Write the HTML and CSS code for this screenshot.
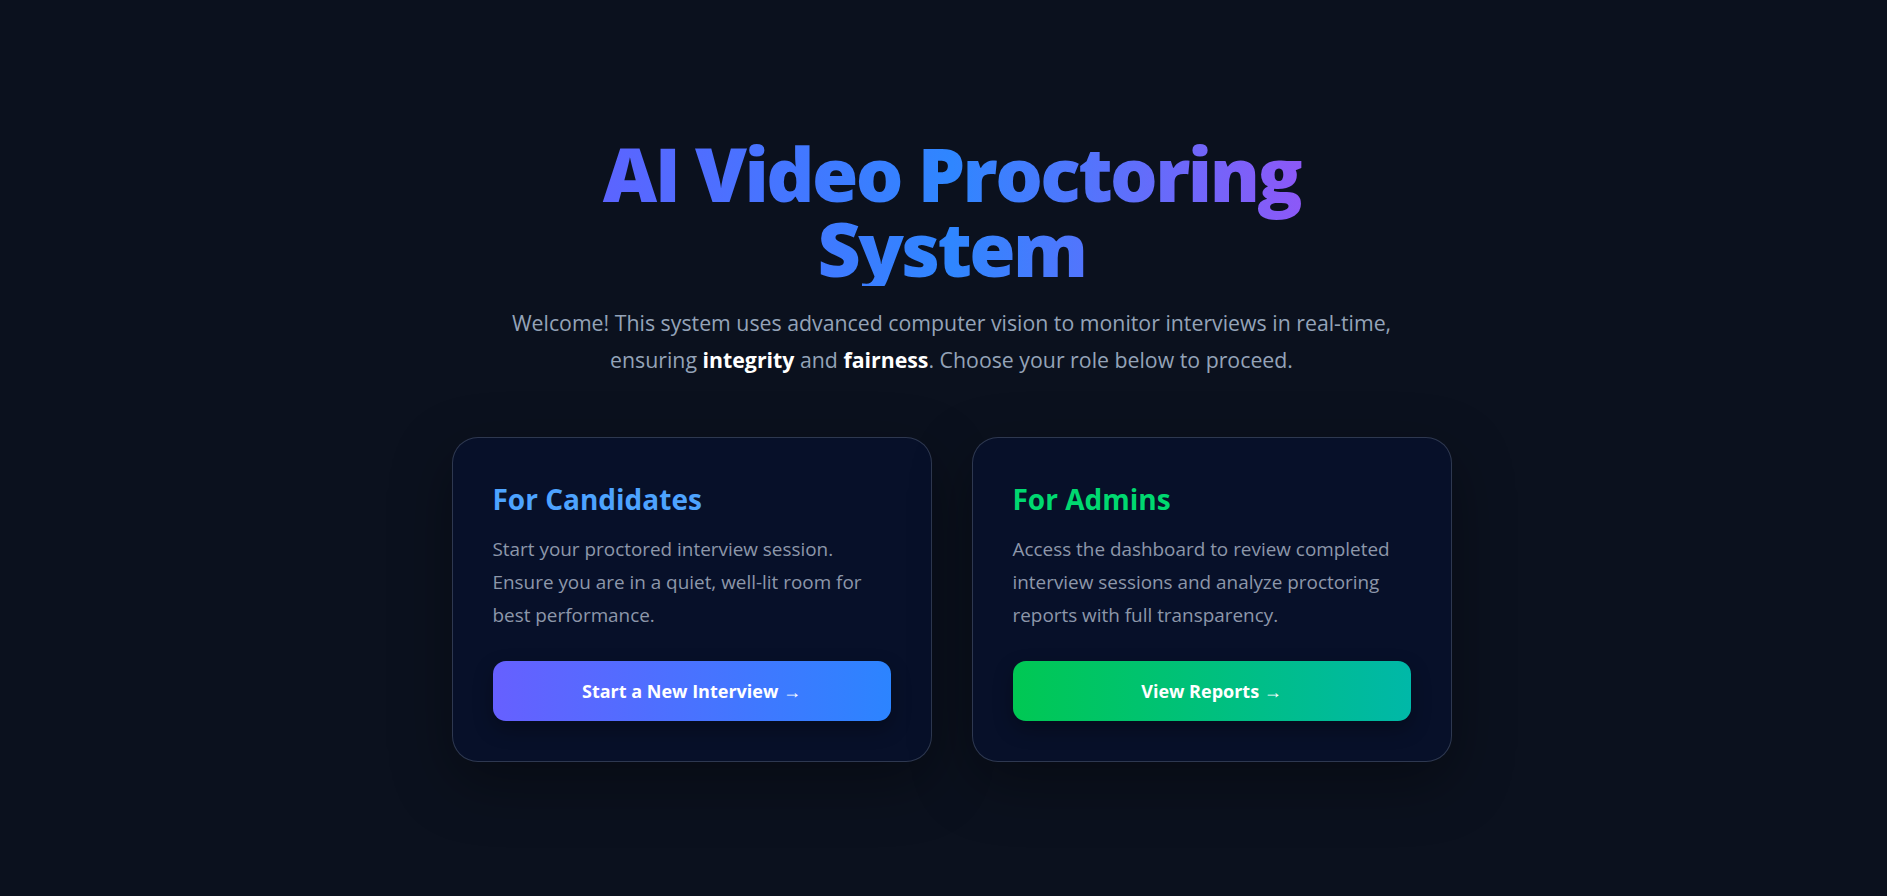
FILE: index.html
```html
<!DOCTYPE html>
<html lang="en">
<head>
<meta charset="utf-8">
<title>AI Video Proctoring System</title>
<link rel="stylesheet" href="styles.css">
</head>
<body>
<main class="page">
  <header class="hero">
    <h1 class="hero-title">AI Video Proctoring System</h1>
    <p class="hero-sub">Welcome! This system uses advanced computer vision to monitor interviews in real-time, ensuring <strong>integrity</strong> and <strong>fairness</strong>. Choose your role below to proceed.</p>
  </header>
  <section class="roles">
    <article class="card">
      <h2 class="card-title card-title--blue">For Candidates</h2>
      <p class="card-text">Start your proctored interview session. Ensure you are in a quiet, well-lit room for best performance.</p>
      <a class="btn btn--blue" href="#">Start a New Interview →</a>
    </article>
    <article class="card">
      <h2 class="card-title card-title--green">For Admins</h2>
      <p class="card-text">Access the dashboard to review completed interview sessions and analyze proctoring reports with full transparency.</p>
      <a class="btn btn--green" href="#">View Reports →</a>
    </article>
  </section>
</main>
</body>
</html>
```

FILE: styles.css
```css
html, body {
  margin: 0;
  padding: 0;
  background: #0b111e;
  height: 100%;
}

body {
  font-family: "Open Sans", "Noto Sans", sans-serif;
  color: #e2e8f0;
}

.page {
  box-sizing: border-box;
  min-height: 100vh;
  padding: 136px 0 0 16px;
  display: flex;
  flex-direction: column;
  align-items: center;
}

.hero {
  width: 900px;
  display: flex;
  flex-direction: column;
  align-items: center;
  text-align: center;
}

.hero-title {
  margin: 0;
  width: 720px;
  font-size: 75px;
  line-height: 1;
  font-weight: 800;
  letter-spacing: -2.6px;
  background: linear-gradient(90deg, #5d63ff 0%, #2f86ff 50%, #8f57f7 100%);
  -webkit-background-clip: text;
  background-clip: text;
  color: transparent;
}

.hero-sub {
  margin: 18px 0 0;
  font-size: 21.3px;
  line-height: 37px;
  color: #94a3b8;
}

.hero-sub strong {
  color: #ffffff;
  font-weight: 700;
}

.roles {
  margin-top: 59px;
  display: grid;
  grid-template-columns: 480px 480px;
  gap: 40px;
}

.card {
  box-sizing: border-box;
  padding: 40px;
  background: #071029;
  border: 1px solid rgba(148, 163, 184, 0.28);
  border-radius: 26px;
  box-shadow: 0 20px 60px rgba(0, 0, 0, 0.35);
  display: flex;
  flex-direction: column;
}

.card-title {
  margin: 0;
  font-size: 28px;
  line-height: 42px;
  font-weight: 700;
}

.card-title--blue { color: #4da3ff; }
.card-title--green { color: #00d870; }

.card-text {
  margin: 13px 0 0;
  font-size: 18.9px;
  line-height: 33px;
  color: #8d97aa;
}

.btn {
  margin-top: 29px;
  height: 60px;
  border-radius: 13px;
  display: flex;
  align-items: center;
  justify-content: center;
  color: #ffffff;
  font-size: 18px;
  font-weight: 700;
  text-decoration: none;
  box-shadow: 0 8px 20px rgba(0, 0, 0, 0.3);
}

.btn--blue { background: linear-gradient(90deg, #6660ff 0%, #2c84ff 100%); }
.btn--green { background: linear-gradient(90deg, #00c853 0%, #00b8a8 100%); }
```
